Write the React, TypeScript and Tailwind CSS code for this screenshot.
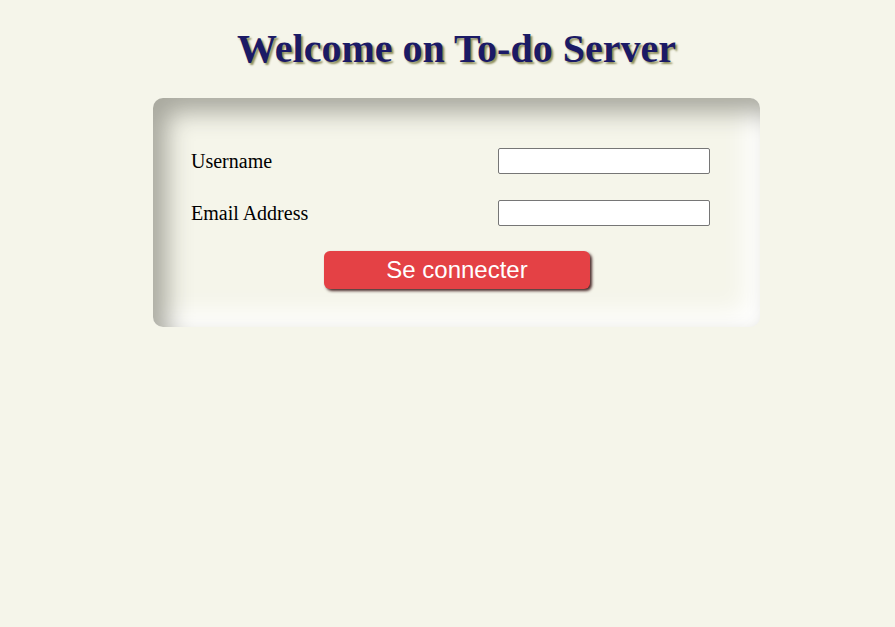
export default function App() {
    return (
        <div className="min-h-[627px] bg-[#f5f5ea] font-['Liberation_Serif',serif] text-black">
            <div className="pl-[153px] w-[760px] pt-[26px]">
                <h1 className="text-center text-[40px] leading-[46px] font-bold text-[#1b1a66] [text-shadow:2px_2px_2px_#8c8c5a]">
                    Welcome on To-do Server
                </h1>
                <div className="mt-[26px] rounded-[10px] pt-[50px] pb-[38px] pl-[38px] pr-[50px] shadow-[inset_14px_14px_24px_#a8a89e,inset_-14px_-14px_24px_#ffffff]">
                    <div className="flex items-center justify-between h-[26px]">
                        <label className="text-[20px]">Username</label>
                        <input type="text" className="w-[212px] h-[26px] bg-white border border-[#767676] rounded-[2px]" />
                    </div>
                    <div className="flex items-center justify-between h-[26px] mt-[26px]">
                        <label className="text-[20px]">Email Address</label>
                        <input type="email" className="w-[212px] h-[26px] bg-white border border-[#767676] rounded-[2px]" />
                    </div>
                    <div className="flex justify-center mt-[25px] pl-[13px]">
                        <button className="w-[266px] h-[38px] rounded-[6px] bg-[#e44145] text-white text-[24px] leading-none font-['Liberation_Sans',sans-serif] shadow-[2px_2px_3px_#4a2a2a]">
                            Se connecter
                        </button>
                    </div>
                </div>
            </div>
        </div>
    );
}
